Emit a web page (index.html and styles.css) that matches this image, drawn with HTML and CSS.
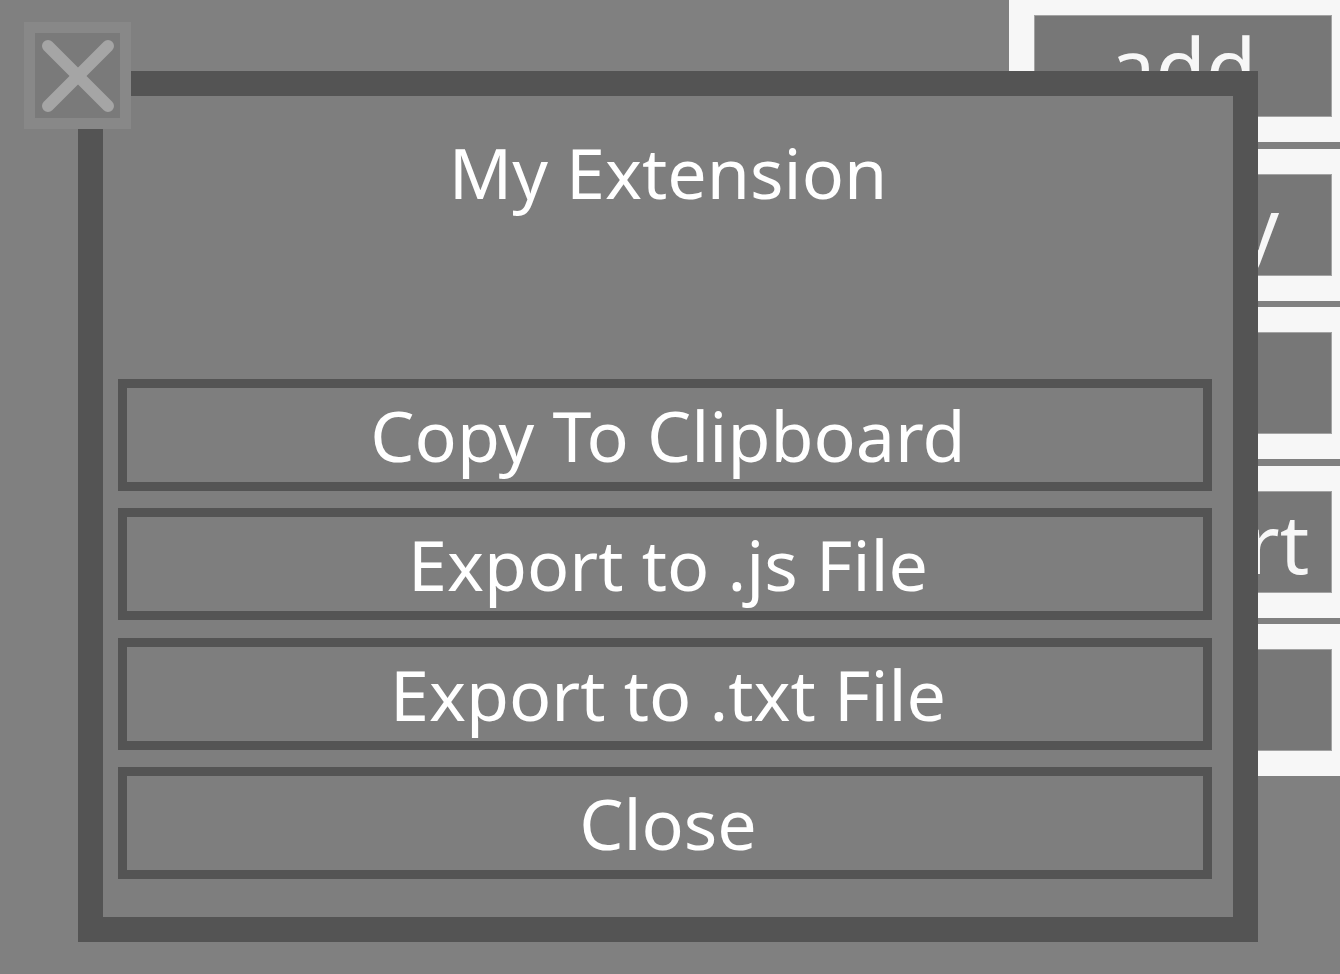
FILE: index.html
```html
<!DOCTYPE html>
<html lang="en">
<head>
    <meta charset="UTF-8">
    <meta name="viewport" content="width=device-width, initial-scale=1.0">
    <title>My Extension</title>
    <link rel="stylesheet" href="styles.css">
</head>
<body>
    <div class="sidebar">
        <div class="side-row"><button class="side-btn">add</button></div>
        <div class="side-row"><button class="side-btn">Copy</button></div>
        <div class="side-row"><button class="side-btn">Edit</button></div>
        <div class="side-row"><button class="side-btn">Export</button></div>
        <div class="side-row"><button class="side-btn">Use</button></div>
    </div>

    <div class="modal">
        <button class="modal-close" aria-label="Close">
            <svg viewBox="0 0 84 84" width="84" height="84">
                <line x1="12" y1="12" x2="72" y2="72" />
                <line x1="72" y1="12" x2="12" y2="72" />
            </svg>
        </button>
        <div class="modal-title">My Extension</div>
        <div class="modal-actions">
            <button class="modal-btn">Copy To Clipboard</button>
            <button class="modal-btn">Export to .js File</button>
            <button class="modal-btn">Export to .txt File</button>
            <button class="modal-btn">Close</button>
        </div>
    </div>
</body>
</html>
```

FILE: styles.css
```css
body {
    font-family: "Noto Sans", "Open Sans", sans-serif;
    margin: 0;
    height: 100vh;
    overflow: hidden;
    background-color: #808080;
    display: flex;
    justify-content: flex-end;
    align-items: flex-start;
}

button {
    font-family: inherit;
    cursor: pointer;
}

.sidebar {
    width: 331px;
    margin-top: -10px;
    display: flex;
    flex-direction: column;
    gap: 6.5px;
    background-color: #808080;
}

.side-row {
    background-color: #f7f7f7;
    padding: 25px 8px 25px 25px;
}

.side-btn {
    display: block;
    width: 100%;
    height: 102px;
    padding: 0;
    border: 1px solid #a3a3a3;
    background-color: #777777;
    color: #f7f7f7;
    font-size: 82px;
    line-height: 100px;
    white-space: nowrap;
    overflow: hidden;
}

.modal {
    position: fixed;
    left: 78px;
    top: 71px;
    width: 1180px;
    height: 871px;
    box-sizing: border-box;
    border: 25px solid #545454;
    background-color: #7e7e7e;
    display: flex;
    flex-direction: column;
}

.modal-close {
    position: absolute;
    left: -79px;
    top: -74px;
    width: 107px;
    height: 107px;
    box-sizing: border-box;
    padding: 0;
    border: 11.5px solid #888888;
    background-color: #7a7a7a;
    display: flex;
    align-items: center;
    justify-content: center;
}

.modal-close svg line {
    stroke: #a5a5a5;
    stroke-width: 12;
    stroke-linecap: round;
}

.modal-title {
    margin-top: 29px;
    text-align: center;
    color: #ffffff;
    font-size: 70px;
    line-height: 95px;
}

.modal-actions {
    margin: auto 21px 38px 15px;
    display: flex;
    flex-direction: column;
    gap: 17.5px;
}

.modal-btn {
    height: 112px;
    box-sizing: border-box;
    padding: 0 0 0 6px;
    border: 9px solid #545454;
    background-color: #7e7e7e;
    color: #ffffff;
    font-size: 70px;
    line-height: 92px;
}
```
